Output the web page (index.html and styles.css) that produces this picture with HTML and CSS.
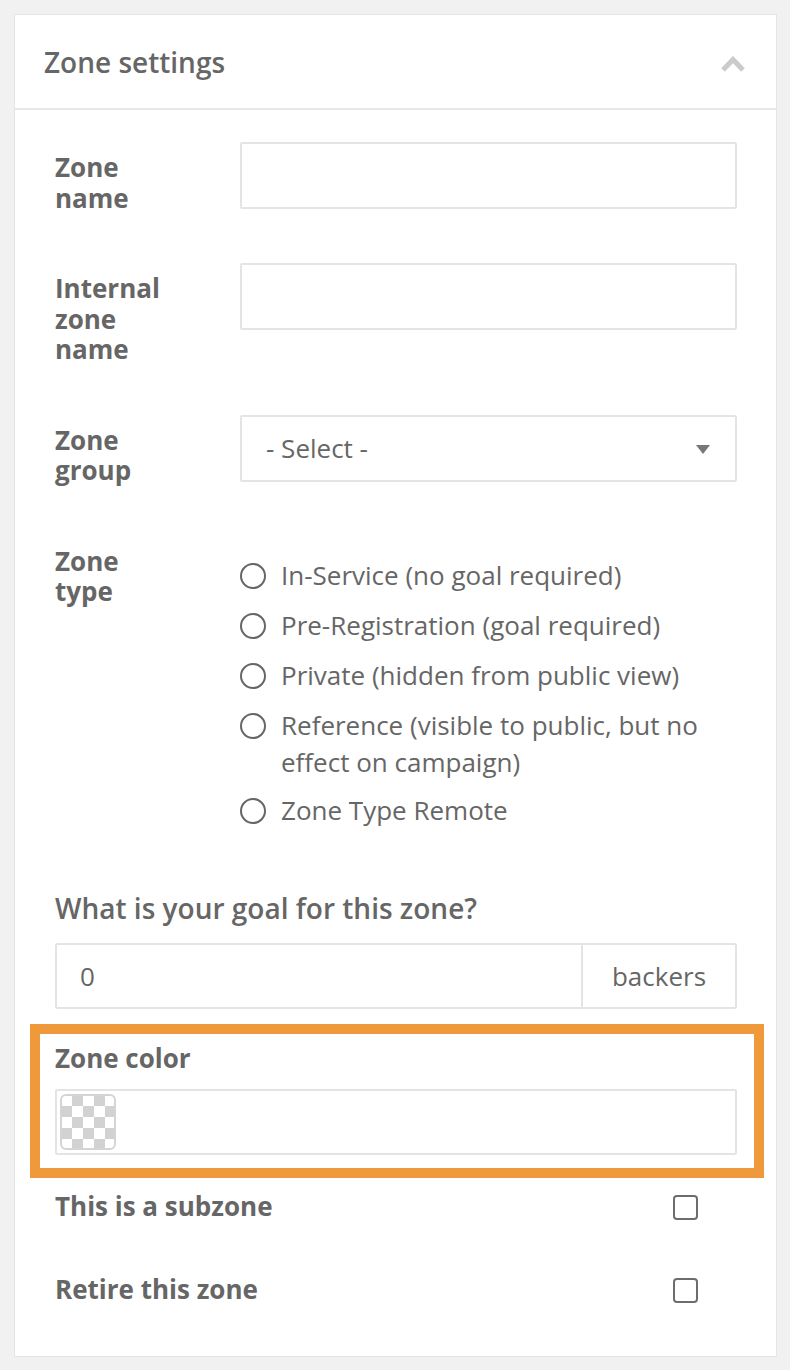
FILE: index.html
```html
<!DOCTYPE html>
<html>
<head>
<meta charset="utf-8">
<link rel="stylesheet" href="styles.css">
</head>
<body>
<div class="card">
  <div class="card-header">
    <h2 class="card-title">Zone settings</h2>
    <svg class="chevron" width="26" height="17" viewBox="0 0 26 17"><polyline points="3,14 13,3.5 23,14" fill="none" stroke="#cbcbcb" stroke-width="5"/></svg>
  </div>
  <div class="card-body">
    <div class="form-row">
      <label class="row-label">Zone name</label>
      <div class="text-input"></div>
    </div>
    <div class="form-row">
      <label class="row-label">Internal zone name</label>
      <div class="text-input"></div>
    </div>
    <div class="form-row">
      <label class="row-label">Zone group</label>
      <div class="text-input select">
        <span>- Select -</span>
        <span class="caret"></span>
      </div>
    </div>
    <div class="form-row type-row">
      <label class="row-label">Zone type</label>
      <ul class="radios">
        <li><span class="radio"></span><span>In-Service (no goal required)</span></li>
        <li><span class="radio"></span><span>Pre-Registration (goal required)</span></li>
        <li><span class="radio"></span><span>Private (hidden from public view)</span></li>
        <li><span class="radio"></span><span>Reference (visible to public, but no effect on campaign)</span></li>
        <li class="last"><span class="radio"></span><span>Zone Type Remote</span></li>
      </ul>
    </div>
    <div class="goal">
      <div class="goal-label">What is your goal for this zone?</div>
      <div class="input-group">
        <div class="group-value">0</div>
        <div class="group-addon">backers</div>
      </div>
    </div>
    <div class="highlight">
      <div class="field-label">Zone color</div>
      <div class="text-input color-input">
        <span class="swatch"></span>
      </div>
    </div>
    <div class="check-row first">
      <span class="field-label">This is a subzone</span>
      <span class="checkbox"></span>
    </div>
    <div class="check-row">
      <span class="field-label">Retire this zone</span>
      <span class="checkbox"></span>
    </div>
  </div>
</div>
</body>
</html>
```
FILE: styles.css
```css
* { box-sizing: border-box; }
html, body { margin: 0; }
body {
  background: #f1f1f1;
  padding: 14px 13px 14px 14px;
  font-family: "Open Sans", "Liberation Sans", sans-serif;
  color: #666;
}
.card {
  background: #fff;
  border: 1px solid #e4e5e6;
}
.card-header {
  height: 95px;
  border-bottom: 2px solid #e6e7e8;
  display: flex;
  align-items: center;
  justify-content: space-between;
  padding: 0 30px 0 29px;
}
.card-title {
  margin: 0;
  font-size: 28px;
  font-weight: 600;
  color: #666;
  line-height: 34px;
}
.chevron { display: block; margin-top: 6px; }
.card-body {
  padding: 32px 39px 52px 40px;
}
.form-row {
  display: grid;
  grid-template-columns: 120px 1fr;
  column-gap: 65px;
  align-items: start;
  margin-bottom: 50px;
}
.row-label {
  padding-top: 10px;
  font-size: 26px;
  font-weight: 700;
  line-height: 30.5px;
  color: #666;
}
.text-input {
  height: 67px;
  border: 2px solid #e4e4e4;
  border-radius: 2px;
  background: #fff;
}
.select {
  display: flex;
  align-items: center;
  justify-content: space-between;
  padding: 0 25px 0 24px;
  font-size: 26px;
  color: #666;
}
.caret {
  width: 0;
  height: 0;
  border-left: 7.5px solid transparent;
  border-right: 7.5px solid transparent;
  border-top: 9px solid #777;
  margin-top: 2px;
}
.type-row { margin-bottom: 64px; }
.radios {
  list-style: none;
  margin: 21px 0 0 0;
  padding: 0;
  display: flex;
  flex-direction: column;
  gap: 13px;
}
.radios li {
  display: flex;
  align-items: flex-start;
  gap: 15px;
  font-size: 26px;
  line-height: 37px;
  color: #666;
}
.radios li.last { margin-top: -2px; }
.radio {
  flex: none;
  width: 26px;
  height: 26px;
  border: 2px solid #666;
  border-radius: 50%;
  margin-top: 6px;
}
.goal-label {
  font-size: 28px;
  font-weight: 600;
  line-height: 30px;
  color: #666;
  margin-bottom: 20px;
}
.input-group {
  display: flex;
  height: 66px;
  border: 2px solid #e4e4e4;
  border-radius: 2px;
  font-size: 26px;
  color: #666;
}
.group-value {
  flex: 1;
  display: flex;
  align-items: center;
  padding-left: 23px;
}
.group-addon {
  width: 154px;
  border-left: 2px solid #e4e4e4;
  display: flex;
  align-items: center;
  justify-content: center;
}
.highlight {
  margin: 15px -27px 0 -25px;
  border: 10px solid #f0993a;
  padding: 9px 17px 13px 15px;
}
.field-label {
  font-size: 26px;
  font-weight: 700;
  line-height: 30px;
  color: #666;
}
.highlight .field-label { margin-bottom: 16px; }
.color-input {
  height: 66px;
  padding: 3px 0 0 3px;
}
.swatch {
  display: block;
  width: 56px;
  height: 56px;
  border: 2px solid #d4d4d4;
  border-radius: 6px;
  background-color: #fff;
  background-image: conic-gradient(#d2d2d2 25%, #fff 0 50%, #d2d2d2 0 75%, #fff 0);
  background-size: 22px 22px;
  background-position: -1px -1px;
}
.check-row {
  display: flex;
  align-items: center;
  justify-content: space-between;
  padding-right: 39px;
  margin-top: 53px;
  height: 30px;
}
.check-row.first { margin-top: 13px; }
.checkbox {
  width: 25px;
  height: 25px;
  border: 2px solid #6d6d6d;
  border-radius: 4px;
  margin-top: 4px;
}
```
